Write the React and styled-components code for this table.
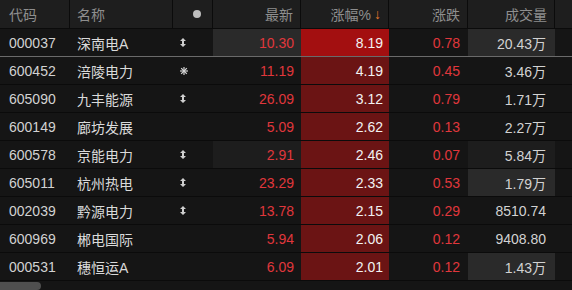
import React from "react";
import styled, { createGlobalStyle } from "styled-components";

const GlobalStyle = createGlobalStyle`
  html, body {
    margin: 0;
    padding: 0;
    background: #141414;
  }
  body {
    font-family: "Liberation Sans", "Noto Sans CJK SC", sans-serif;
  }
`;

const COLS = "70px 103px 40px 88px 88px 79px 87px 17px";

const rows = [
  { code: "000037", name: "深南电A", mark: "updown", last: "10.30", pct: "8.19", chg: "0.78", vol: "20.43万", hot: true, lastFlash: "strong", volFlash: "strong" },
  { code: "600452", name: "涪陵电力", mark: "star", last: "11.19", pct: "4.19", chg: "0.45", vol: "3.46万" },
  { code: "605090", name: "九丰能源", mark: "updown", last: "26.09", pct: "3.12", chg: "0.79", vol: "1.71万" },
  { code: "600149", name: "廊坊发展", last: "5.09", pct: "2.62", chg: "0.13", vol: "2.27万" },
  { code: "600578", name: "京能电力", mark: "updown", last: "2.91", pct: "2.46", chg: "0.07", vol: "5.84万", lastFlash: "soft", volFlash: "soft" },
  { code: "605011", name: "杭州热电", mark: "updown", last: "23.29", pct: "2.33", chg: "0.53", vol: "1.79万", volFlash: "strong" },
  { code: "002039", name: "黔源电力", mark: "updown", last: "13.78", pct: "2.15", chg: "0.29", vol: "8510.74" },
  { code: "600969", name: "郴电国际", last: "5.94", pct: "2.06", chg: "0.12", vol: "9408.80" },
  { code: "000531", name: "穗恒运A", last: "6.09", pct: "2.01", chg: "0.12", vol: "1.43万", volFlash: "strong" },
];

const flashBg = (f) => (f === "strong" ? "#2a2a2a" : f === "soft" ? "#1d1d1d" : "transparent");

const Table = styled.div`
  width: 572px;
  height: 290px;
  background: #151515;
  display: flex;
  flex-direction: column;
  overflow: hidden;
`;

const Header = styled.div`
  display: grid;
  grid-template-columns: ${COLS};
  height: 29px;
  background: #1e1e1e;
  border-bottom: 1px solid #0b0b0b;
  box-sizing: border-box;
`;

const HeadCell = styled.div`
  display: flex;
  align-items: center;
  justify-content: ${(p) => (p.$align === "right" ? "flex-end" : p.$align === "center" ? "center" : "flex-start")};
  padding: 0 ${(p) => (p.$align === "right" ? "7px" : "0")} 0 ${(p) => (p.$align === "right" ? "0" : p.$pad || "9px")};
  border-right: 1px solid #0b0b0b;
  color: #8e8e8e;
  font-size: 14px;
  box-sizing: border-box;
  &:last-child {
    border-right: none;
  }
`;

const SortArrow = styled.span`
  color: #e8782c;
  margin-left: 3px;
  font-size: 14px;
`;

const Dot = styled.span`
  width: 8px;
  height: 8px;
  border-radius: 50%;
  background: #bdbdbd;
`;

const Row = styled.div`
  display: grid;
  grid-template-columns: ${COLS};
  height: 28px;
  box-sizing: border-box;
  border-bottom: 1px solid ${(p) => (p.$selected ? "#6a6a6a" : "#0b0b0b")};
`;

const Cell = styled.div`
  display: flex;
  align-items: center;
  justify-content: ${(p) => (p.$right ? "flex-end" : "flex-start")};
  padding: ${(p) => (p.$right ? `0 ${p.$pr || "7px"} 0 0` : `0 0 0 ${p.$pl || "9px"}`)};
  font-size: 14px;
  color: ${(p) => p.$color || "#d2d2d2"};
  background: ${(p) => p.$bg || "transparent"};
  box-sizing: border-box;
  white-space: nowrap;
`;

const PctCell = styled(Cell)`
  background: ${(p) => (p.$hot ? "#a30f10" : "#6b1414")};
  color: #f2f2f2;
`;

const Scrollbar = styled.div`
  height: 8px;
  margin-top: 1px;
  display: flex;
`;

const Thumb = styled.div`
  width: 41px;
  height: 8px;
  background: #4f4f4f;
  border-radius: 0 4px 4px 0;
`;

const UpDown = () => (
  <svg width="6" height="9" viewBox="0 0 6 9">
    <polygon points="3,0 6,3 4,3 4,6 6,6 3,9 0,6 2,6 2,3 0,3" fill="#cfcfcf" />
  </svg>
);

const Star = () => (
  <svg width="8" height="8" viewBox="0 0 8 8" stroke="#d6d6d6" strokeWidth="1.2">
    <line x1="4" y1="0" x2="4" y2="8" />
    <line x1="0" y1="4" x2="8" y2="4" />
    <line x1="1.2" y1="1.2" x2="6.8" y2="6.8" />
    <line x1="6.8" y1="1.2" x2="1.2" y2="6.8" />
  </svg>
);

const RED = "#e0373c";

export default function App() {
  return (
    <>
      <GlobalStyle />
      <Table>
        <Header>
          <HeadCell>代码</HeadCell>
          <HeadCell $pad="7px">名称</HeadCell>
          <HeadCell $align="center">
            <Dot />
          </HeadCell>
          <HeadCell $align="right">最新</HeadCell>
          <HeadCell $align="right">
            涨幅%<SortArrow>↓</SortArrow>
          </HeadCell>
          <HeadCell $align="right">涨跌</HeadCell>
          <HeadCell $align="right">成交量</HeadCell>
          <HeadCell />
        </Header>
        {rows.map((r, i) => (
          <Row key={r.code} $selected={i === 0}>
            <Cell>{r.code}</Cell>
            <Cell $pl="7px" $color="#dadada">{r.name}</Cell>
            <Cell $pl="7px">
              {r.mark === "updown" && <UpDown />}
              {r.mark === "star" && <Star />}
            </Cell>
            <Cell $right $color={RED} $bg={flashBg(r.lastFlash)}>{r.last}</Cell>
            <PctCell $right $pr="6px" $hot={r.hot}>{r.pct}</PctCell>
            <Cell $right $pr="8px" $color={RED}>{r.chg}</Cell>
            <Cell $right $pr="9px" $bg={flashBg(r.volFlash)}>{r.vol}</Cell>
            <Cell />
          </Row>
        ))}
        <Scrollbar>
          <Thumb />
        </Scrollbar>
      </Table>
    </>
  );
}
